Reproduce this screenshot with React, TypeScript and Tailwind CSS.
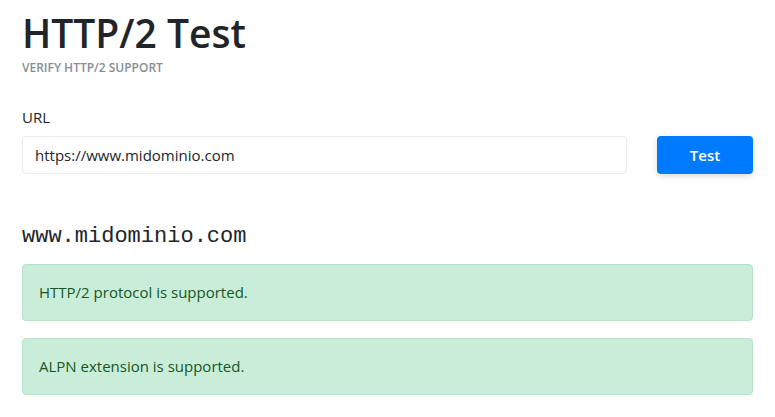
import React from 'react';

const App = () => {
  return (
    <div className="min-h-screen bg-white px-[22px] pt-[10px] font-['Open_Sans',sans-serif] text-[#212529]">
      {/* Header */}
      <h1 className="text-[39px] font-semibold leading-[1.2]">HTTP/2 Test</h1>
      <p className="mt-[2px] text-[12px] font-semibold uppercase text-[#868e96]">
        Verify HTTP/2 support
      </p>

      {/* Form */}
      <div className="mt-[29px]">
        <label className="block text-[15px] leading-[22px]">URL</label>
        <div className="mt-[8px] flex items-center gap-[30px]">
          <input
            type="text"
            defaultValue="https://www.midominio.com"
            className="h-[38px] flex-1 rounded border border-[#e9ecef] px-[12px] text-[15px] text-[#212529] outline-none"
          />
          <button className="h-[38px] w-[96px] rounded bg-[#007bff] text-[15px] font-semibold text-white shadow-[0_2px_6px_rgba(0,0,0,0.15)]">
            Test
          </button>
        </div>
      </div>

      {/* Result */}
      <h2 className="mt-[50px] font-['Liberation_Mono',monospace] text-[22px] leading-[26px]">www.midominio.com</h2>
      <div className="mt-[14px] space-y-[17px]">
        <div className="flex h-[57px] items-center rounded border border-[#b4e4c9] bg-[#c9edd9] px-[16px] text-[15px] text-[#155724]">
          HTTP/2 protocol is supported.
        </div>
        <div className="flex h-[57px] items-center rounded border border-[#b4e4c9] bg-[#c9edd9] px-[16px] text-[15px] text-[#155724]">
          ALPN extension is supported.
        </div>
      </div>
    </div>
  );
};

export default App;
